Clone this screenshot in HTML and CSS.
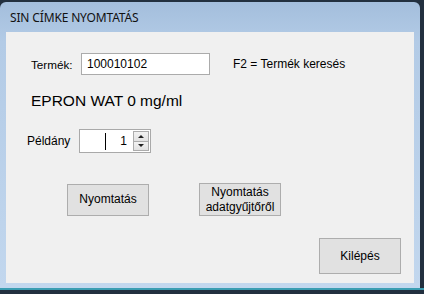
FILE: index.html
```html
<!DOCTYPE html>
<html lang="hu">
<head>
<meta charset="utf-8">
<title>SIN CÍMKE NYOMTATÁS</title>
<link rel="stylesheet" href="styles.css">
</head>
<body>
<div class="desktop">
  <div class="window">
    <div class="titlebar">SIN CÍMKE NYOMTATÁS</div>
    <div class="client">
      <div class="row row-product">
        <span class="label label-product">Termék:</span>
        <div class="textbox">100010102</div>
        <span class="hint">F2 = Termék keresés</span>
      </div>
      <div class="product-name">EPRON WAT 0 mg/ml</div>
      <div class="row row-copies">
        <span class="label">Példány</span>
        <div class="spinner">
          <div class="spin-field"><span class="caret"></span><span class="spin-value">1</span></div>
          <div class="spin-buttons">
            <div class="spin-btn"><span class="arrow-up"></span></div>
            <div class="spin-btn"><span class="arrow-down"></span></div>
          </div>
        </div>
      </div>
      <div class="row row-actions">
        <button class="btn btn-print">Nyomtatás</button>
        <button class="btn btn-collector">Nyomtatás<br>adatgyűjtőről</button>
      </div>
      <div class="row row-exit">
        <button class="btn btn-exit">Kilépés</button>
      </div>
    </div>
  </div>
  <div class="taskbar-line"></div>
</div>
</body>
</html>
```

FILE: styles.css
```css
html, body {
  margin: 0;
  padding: 0;
}
body {
  width: 424px;
  height: 294px;
  overflow: hidden;
  background: #22303f;
  font-family: "Liberation Sans", Arial, sans-serif;
  font-size: 12px;
  color: #000;
}
.desktop {
  display: flex;
  flex-direction: column;
  padding-top: 2px;
}
.window {
  width: 420px;
  height: 286px;
  box-sizing: border-box;
  border-radius: 6px 6px 0 0;
  background: linear-gradient(to bottom, #a3bedc 0px, #b3cbe6 40px, #c2d7ee 286px);
  padding: 0 6px 5px 6px;
  display: flex;
  flex-direction: column;
}
.titlebar {
  height: 30px;
  box-sizing: border-box;
  padding: 8px 0 0 4px;
  font-family: "Noto Sans", "Open Sans", sans-serif;
  font-size: 12px;
  line-height: 16px;
  color: #111;
  letter-spacing: -0.15px;
}
.client {
  flex: 1;
  background: #f0f0f0;
  display: flex;
  flex-direction: column;
  padding: 21px 0 0 0;
}
.row {
  display: flex;
  align-items: center;
}
.label {
  font-size: 12px;
}
.row-product {
  padding-left: 25px;
  height: 22px;
}
.label-product {
  width: 50px;
  font-size: 11.7px;
}
.textbox {
  width: 129px;
  height: 22px;
  box-sizing: border-box;
  border: 1px solid #ababab;
  background: #fff;
  padding: 0 0 0 5px;
  line-height: 20px;
  font-size: 12px;
}
.hint {
  margin-left: 23px;
  font-size: 12px;
}
.product-name {
  margin: 16px 0 0 25px;
  font-size: 15.5px;
  line-height: 19px;
  height: 19px;
}
.row-copies {
  margin-top: 19px;
  padding-left: 21px;
  height: 24px;
}
.row-copies .label {
  width: 52px;
}
.spinner {
  width: 72px;
  height: 24px;
  box-sizing: border-box;
  border: 1px solid #a9a9a9;
  background: #fff;
  display: flex;
  align-items: center;
  padding: 1px 1px 1px 0;
}
.spin-field {
  flex: 1;
  height: 100%;
  position: relative;
  display: flex;
  align-items: center;
  justify-content: flex-end;
  padding-right: 6px;
}
.caret {
  position: absolute;
  left: 25px;
  top: 2px;
  width: 1px;
  height: 17px;
  background: #000;
}
.spin-value {
  font-size: 12px;
}
.spin-buttons {
  width: 16px;
  height: 20px;
  display: flex;
  flex-direction: column;
}
.spin-btn {
  flex: 1;
  box-sizing: border-box;
  border: 1px solid #acacac;
  background: linear-gradient(#f2f2f2, #e2e2e2);
  display: flex;
  align-items: center;
  justify-content: center;
}
.spin-btn + .spin-btn {
  border-top: none;
}
.arrow-up {
  width: 0;
  height: 0;
  border-left: 3px solid transparent;
  border-right: 3px solid transparent;
  border-bottom: 3px solid #222;
}
.arrow-down {
  width: 0;
  height: 0;
  border-left: 3px solid transparent;
  border-right: 3px solid transparent;
  border-top: 3px solid #222;
}
.row-actions {
  margin-top: 30px;
  padding-left: 61px;
  gap: 50px;
}
.btn {
  font-family: "Liberation Sans", Arial, sans-serif;
  font-size: 12px;
  line-height: 15px;
  color: #000;
  background: #e1e1e1;
  border: 1px solid #adadad;
  border-radius: 0;
  padding: 0;
  margin: 0;
  width: 82px;
  height: 32px;
  text-align: center;
}
.btn-collector {
  height: 33px;
}
.row-exit {
  margin-top: 22px;
  justify-content: flex-end;
  padding-right: 13px;
}
.btn-exit {
  height: 36px;
}
.taskbar-line {
  height: 2px;
  background: #3a9db2;
}
```
